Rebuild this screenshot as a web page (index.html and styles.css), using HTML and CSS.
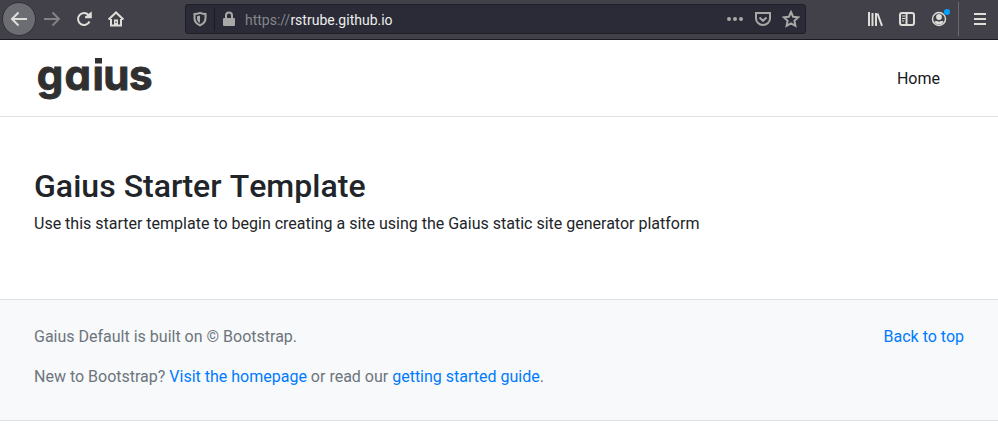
FILE: index.html
```html
<!DOCTYPE html>
<html lang="en">
<head>
<meta charset="utf-8">
<title>Gaius Starter Template</title>
<link rel="stylesheet" href="styles.css">
</head>
<body>
<div class="toolbar">
  <div class="nav">
    <span class="back"><svg width="18" height="18" viewBox="0 0 18 18"><path d="M17 9H3M8.500 2.500L2 9L8.500 15.500"/></svg></span>
    <svg class="dim" width="18" height="18" viewBox="0 0 18 18"><path d="M1 9h14M9.500 2.500L16 9L9.500 15.500"/></svg>
    <svg class="reload" width="18" height="18" viewBox="0 0 18 18"><path d="M14.500 11.500A6 6 0 1 1 13.500 5"/><path class="fill" d="M16.800 1.500V8.200H10V6.500L12.500 5L14.500 3Z"/></svg>
    <svg class="home" width="18" height="18" viewBox="0 0 18 18"><path d="M1.600 9.500L9 2.500L16.400 9.500M4 9v6.500h10V9"/><path class="fill" d="M7 9.500h4v6H7z"/><path class="hole" d="M9 11.500v1.500"/></svg>
  </div>
  <div class="url">
    <span class="shield"><svg width="14" height="16" viewBox="0 0 14 16"><path d="M7 1.800C5 2.700 3 3 1.500 3v4c0 3.500 2.300 6 5.500 7.300 3.200-1.300 5.500-3.800 5.500-7.300V3C11 3 9 2.700 7 1.800Z"/><path class="fill" d="M7 4.500L4 5.300V7.500c0 2 1.200 3.500 3 4.500Z"/></svg></span>
    <svg class="lock" width="14" height="16" viewBox="0 0 14 16"><path d="M4 8V4.500a3 3 0 0 1 6 0V8"/><rect class="fill" x="1" y="7" width="12" height="8" rx="1"/></svg>
    <span class="address">https://<b>rstrube.github.io</b></span>
    <div class="actions">
      <svg width="18" height="18" viewBox="0 0 18 18"><g class="fill"><circle cx="3" cy="9" r="2"/><circle cx="9" cy="9" r="2"/><circle cx="15" cy="9" r="2"/></g></svg>
      <svg width="18" height="18" viewBox="0 0 18 18"><path d="M2 3h14v5.500a7 6.500 0 0 1-14 0ZM5.500 7.500L9 10.800l3.500-3.300"/></svg>
      <svg width="18" height="18" viewBox="0 0 18 18"><path d="M9 2l2.100 4.700 5 .6-3.700 3.500 1 5L9 13.300l-4.400 2.500 1-5L1.900 7.300l5-.6Z"/></svg>
    </div>
  </div>
  <div class="tools">
    <svg width="18" height="18" viewBox="0 0 18 18"><path d="M3 2v14M6.500 3v13M10 3v13M11.500 3.500l4.500 12.300"/></svg>
    <svg class="side" width="18" height="18" viewBox="0 0 18 18"><rect x="2" y="3" width="14" height="12" rx="2"/><path d="M8.500 3v12"/><path class="thin" d="M4 6h3M4 8.500h3M4 11h2"/></svg>
    <span class="account"><svg width="18" height="18" viewBox="0 0 18 18"><circle class="ring" cx="9" cy="9" r="6.500"/><circle class="fill" cx="9" cy="7" r="2.900"/><path class="fill" d="M4.300 11.500c1.500-.8 3-.8 4.700.3 1.700-1.100 3.200-1.100 4.700-.3-.8 2-2.500 3-4.700 3s-3.900-1-4.700-3Z"/></svg><i class="badge"></i></span>
    <span class="menu"><svg width="14" height="14" viewBox="0 0 14 14"><path d="M1 2h12M1 7h12M1 12h12"/></svg></span>
  </div>
</div>
<header>
  <svg class="logo" width="124" height="60" viewBox="0 0 124 60"><text x="4.800 32.500 60.500 71.200 97" y="41.600">gaius</text><rect class="gap" x="60" y="7" width="12" height="10"/><rect class="dot" x="63" y="10" width="7" height="5.500"/></svg>
  <a class="home-link">Home</a>
</header>
<main>
  <h1>Gaius Starter Template</h1>
  <p>Use this starter template to begin creating a site using the Gaius static site generator platform</p>
</main>
<footer>
  <div>
    <p>Gaius Default is built on © Bootstrap.</p>
    <p>New to Bootstrap? <a>Visit the homepage</a> or read our <a>getting started guide</a>.</p>
  </div>
  <a>Back to top</a>
</footer>
</body>
</html>
```
FILE: styles.css
```css
* { box-sizing: border-box; }
body { margin: 0; background: #fff; color: #212529; font: 16px/24px Roboto, sans-serif; overflow: hidden; }
svg { display: block; flex: none; fill: none; stroke: currentColor; stroke-width: 2; }
svg .fill { fill: currentColor; stroke: none; }
.toolbar { height: 40px; display: flex; align-items: flex-start; background: #42414a; border-bottom: 1px solid #1b1a22; color: #deded9; }
.nav { width: 185px; height: 38px; padding-left: 2px; display: flex; align-items: center; gap: 14px; }
.back { width: 34px; height: 34px; margin-right: -7px; border: 1px solid #302f37; border-radius: 50%; background: #6c6c73; display: grid; place-items: center; }
.dim { color: #828287; }
.hole { stroke: #42414a; stroke-width: 1.3; }
.url { width: 621px; height: 30px; margin-top: 4px; border: 1px solid #1f1f28; border-radius: 3px; background: #2a2b36; display: flex; align-items: center; color: #a8a8a7; }
.shield { width: 29px; height: 23px; padding-left: 7px; border-right: 1px solid #191a23; display: flex; align-items: center; }
.lock { margin-left: 7px; }
.address { margin: 2px 0 0 9px; font-size: 14px; line-height: 20px; color: #85868b; }
.address b { color: #ededeb; font-weight: 400; }
.actions { margin-left: auto; padding-right: 5px; display: flex; gap: 10px; }
.tools { margin-left: auto; height: 38px; display: flex; align-items: center; gap: 14px; }
.side .thin { stroke-width: 1; }
.account { position: relative; }
.ring { stroke-width: 1.4; }
.badge { position: absolute; width: 6px; height: 6px; right: -2px; top: -1px; border-radius: 50%; background: #00a2ff; }
.menu { margin-left: -4px; height: 34px; width: 40px; border-left: 1px solid #69696e; display: grid; place-items: center; padding-left: 3px; }
header { height: 77px; padding: 0 58px 0 32px; border-bottom: 1px solid #dee2e6; display: flex; justify-content: space-between; align-items: center; }
.logo { stroke: none; fill: #303030; }
.logo text { font: 700 42px Inter, sans-serif; font-optical-sizing: none; font-feature-settings: "cv11"; stroke: #303030; stroke-width: .9; }
.logo .gap { fill: #fff; }
.home-link { color: #16181b; padding-top: 2px; }
main { height: 182px; padding: 50px 34px 0; }
h1 { margin: 0 0 7px; font-size: 32px; line-height: 38px; font-weight: 500; font-kerning: none; letter-spacing: .04px; }
p { margin: 0 0 16px; }
footer { height: 122px; padding: 25px 34px; border: solid #dee2e6; border-width: 1px 0; background: #f8f9fa; color: #6c757d; display: flex; justify-content: space-between; }
footer a { color: #007bff; }
```
